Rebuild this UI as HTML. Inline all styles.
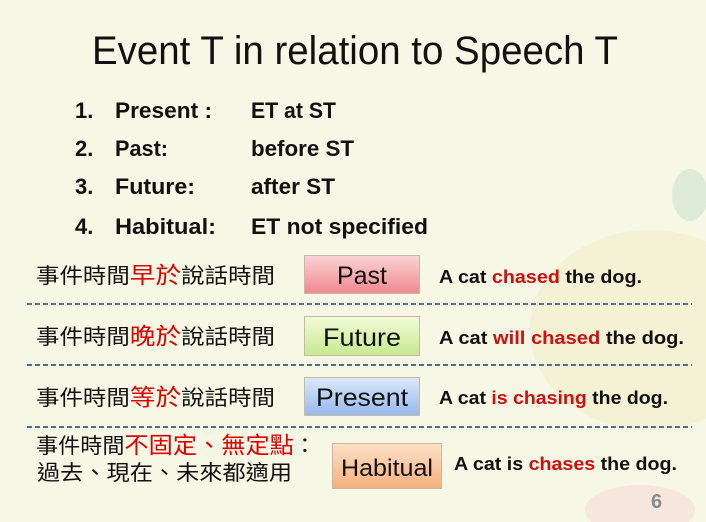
<!DOCTYPE html>
<html><head><meta charset="utf-8"><style>
html,body{margin:0;padding:0;background:#f6f7e4;}
svg{display:block}
</style></head><body>
<svg width="706" height="522" viewBox="0 0 706 522" xmlns="http://www.w3.org/2000/svg">
<defs>
<linearGradient id="gp" x1="0" y1="0" x2="0" y2="1"><stop offset="0" stop-color="#fbd3d5"/><stop offset="1" stop-color="#f0888e"/></linearGradient>
<linearGradient id="gf" x1="0" y1="0" x2="0" y2="1"><stop offset="0" stop-color="#f2fbd8"/><stop offset="1" stop-color="#c6ea90"/></linearGradient>
<linearGradient id="gr" x1="0" y1="0" x2="0" y2="1"><stop offset="0" stop-color="#dce8fb"/><stop offset="1" stop-color="#96b8ec"/></linearGradient>
<linearGradient id="gh" x1="0" y1="0" x2="0" y2="1"><stop offset="0" stop-color="#fde0c8"/><stop offset="1" stop-color="#f6b07c"/></linearGradient>
</defs>
<rect width="706" height="522" fill="#f6f7e4"/>
<ellipse cx="650" cy="330" rx="120" ry="100" fill="#f4ecca" opacity="0.6"/>
<ellipse cx="690" cy="195" rx="18" ry="26" fill="#c3dccc" opacity="0.45"/>
<ellipse cx="640" cy="510" rx="55" ry="25" fill="#f3d3d8" opacity="0.45"/>
<g font-family="Liberation Sans, sans-serif">
<text x="92" y="64" font-size="40" textLength="526" lengthAdjust="spacingAndGlyphs" fill="#111">Event T in relation to Speech T</text>
<g font-size="22" font-weight="bold" fill="#111">
<text x="75" y="118">1.</text><text x="115" y="118" textLength="97" lengthAdjust="spacingAndGlyphs">Present :</text><text x="251" y="118" textLength="85" lengthAdjust="spacingAndGlyphs">ET at ST</text>
<text x="75" y="156">2.</text><text x="115" y="156" textLength="53" lengthAdjust="spacingAndGlyphs">Past:</text><text x="251" y="156" textLength="103" lengthAdjust="spacingAndGlyphs">before ST</text>
<text x="75" y="194">3.</text><text x="115" y="194" textLength="80" lengthAdjust="spacingAndGlyphs">Future:</text><text x="251" y="194" textLength="84" lengthAdjust="spacingAndGlyphs">after ST</text>
<text x="75" y="234">4.</text><text x="115" y="234" textLength="101" lengthAdjust="spacingAndGlyphs">Habitual:</text><text x="251" y="234" textLength="177" lengthAdjust="spacingAndGlyphs">ET not specified</text>
</g>
<g stroke="#4d6e9e" stroke-width="2" stroke-dasharray="5,3">
<line x1="27" y1="304" x2="692" y2="304"/><line x1="27" y1="365" x2="692" y2="365"/><line x1="27" y1="427" x2="692" y2="427"/>
</g>
<g font-family="Liberation Sans, Noto Sans CJK TC, sans-serif" font-size="21" fill="#111">
<text x="36" y="283" textLength="239" lengthAdjust="spacingAndGlyphs">事件時間<tspan fill="#e00000" font-size="23">早於</tspan>說話時間</text>
<text x="36" y="344" textLength="239" lengthAdjust="spacingAndGlyphs">事件時間<tspan fill="#e00000" font-size="23">晚於</tspan>說話時間</text>
<text x="36" y="405" textLength="239" lengthAdjust="spacingAndGlyphs">事件時間<tspan fill="#e00000" font-size="23">等於</tspan>說話時間</text>
<text x="36" y="453" textLength="280" lengthAdjust="spacingAndGlyphs">事件時間<tspan fill="#e00000" font-size="23">不固定、無定點</tspan>：</text>
<text x="37" y="480" textLength="255" lengthAdjust="spacingAndGlyphs">過去、現在、未來都適用</text>
</g>
<g stroke="#c9b9a0" stroke-width="1">
<rect x="304.5" y="255.5" width="115" height="38" fill="url(#gp)"/>
<rect x="304.5" y="316.5" width="115" height="39" fill="url(#gf)"/>
<rect x="304.5" y="377.5" width="115" height="38" fill="url(#gr)"/>
<rect x="332.5" y="443.5" width="109" height="45" fill="url(#gh)"/>
</g>
<g font-size="25" fill="#111" text-anchor="middle">
<text x="362" y="284" textLength="50" lengthAdjust="spacingAndGlyphs">Past</text>
<text x="362" y="346" textLength="78" lengthAdjust="spacingAndGlyphs">Future</text>
<text x="362" y="406" textLength="92" lengthAdjust="spacingAndGlyphs">Present</text>
<text x="387" y="476" font-size="24" textLength="92" lengthAdjust="spacingAndGlyphs">Habitual</text>
</g>
<g font-size="18" font-weight="bold" fill="#111">
<text x="439" y="283" textLength="203" lengthAdjust="spacingAndGlyphs">A cat <tspan fill="#d01010">chased</tspan> the dog.</text>
<text x="439" y="344" textLength="245" lengthAdjust="spacingAndGlyphs">A cat <tspan fill="#d01010">will chased</tspan> the dog.</text>
<text x="439" y="404" textLength="229" lengthAdjust="spacingAndGlyphs">A cat <tspan fill="#d01010">is chasing</tspan> the dog.</text>
<text x="454" y="470" textLength="223" lengthAdjust="spacingAndGlyphs">A cat is <tspan fill="#d01010">chases</tspan> the dog.</text>
</g>
<text x="651" y="508" font-size="20" font-weight="bold" fill="#8a8a8a">6</text>
</g>
</svg>
</body></html>
